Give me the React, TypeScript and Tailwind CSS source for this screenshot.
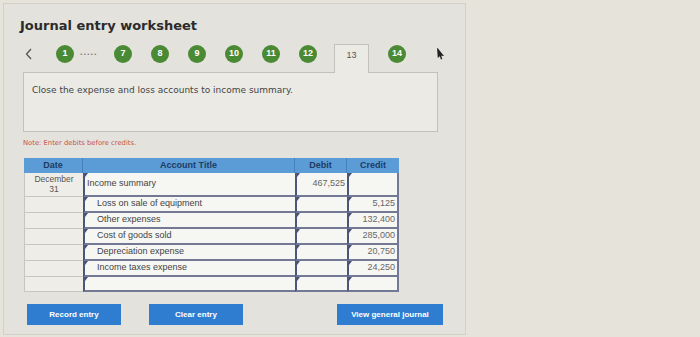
import React from "react";

const STEPS_BEFORE = [8, 9, 10, 11, 12];

// Each journal line: account title, indent flag, debit, credit
const ROWS = [
  { account: "Income summary", indent: false, debit: "467,525", credit: "" },
  { account: "Loss on sale of equipment", indent: true, debit: "", credit: "5,125" },
  { account: "Other expenses", indent: true, debit: "", credit: "132,400" },
  { account: "Cost of goods sold", indent: true, debit: "", credit: "285,000" },
  { account: "Depreciation expense", indent: true, debit: "", credit: "20,750" },
  { account: "Income taxes expense", indent: true, debit: "", credit: "24,250" },
  { account: "", indent: false, debit: "", credit: "" },
];

const StepCircle = ({ n, className = "" }: { n: number; className?: string }) => (
  <div
    className={`mt-[1px] w-[18px] h-[18px] rounded-full bg-[#4b8a34] text-white text-[9px] font-bold flex items-center justify-center shrink-0 ${className}`}
  >
    {n}
  </div>
);

// little dropdown marker shown in the top-left corner of editable cells
const Marker = () => (
  <span className="absolute left-0 top-0 w-0 h-0 border-t-[4px] border-r-[3px] border-t-[#44527a] border-r-transparent" />
);

const App = () => {
  return (
    <div
      className="w-[700px] h-[337px] bg-[#e6e3db] pt-[3px] pl-[3px] overflow-hidden"
      style={{ fontFamily: '"Liberation Sans", Arial, sans-serif' }}
    >
      <div className="w-[463px] h-[332px] border border-[#d3d0c9] bg-[#e4e2dc] flex flex-col">
        {/* Title */}
        <h1
          className="ml-[16px] mt-[14px] text-[13px] leading-[16px] font-bold text-[#2b2b2b]"
          style={{ fontFamily: '"DejaVu Sans", Verdana, sans-serif' }}
        >
          Journal entry worksheet
        </h1>

        {/* Step navigation */}
        <div className="mt-[10px] h-[29px] flex items-start">
          <svg className="ml-[21px] mt-[4px] w-[7px] h-[12px] shrink-0" viewBox="0 0 7 12">
            <path d="M6 1 L1.5 6 L6 11" fill="none" stroke="#555" strokeWidth="1.3" />
          </svg>
          <StepCircle n={1} className="ml-[24px]" />
          <span className="ml-[6px] w-[26px] mt-[3px] text-[9px] leading-[10px] tracking-[1px] text-[#777] font-bold">
            .....
          </span>
          <StepCircle n={7} className="ml-[8px]" />
          {STEPS_BEFORE.map((n) => (
            <StepCircle key={n} n={n} className="ml-[19px]" />
          ))}
          <div className="ml-[17px] w-[35px] h-[29px] border border-b-0 border-[#c3c1bb] bg-[#eceae5] relative z-10 text-center text-[9px] leading-[10px] pt-[5px] text-[#555] shrink-0">
            13
          </div>
          <StepCircle n={14} className="ml-[19px]" />
          <svg className="ml-[30px] mt-[3px] w-[9px] h-[13px] shrink-0" viewBox="0 0 9 13">
            <path d="M1 1 L2 1.5 L8 9 L5.2 8.8 L6.3 12 L5 12.5 L3.8 9.3 L1.8 11 Z" fill="#222" />
          </svg>
        </div>

        {/* Instruction box */}
        <div className="ml-[19px] -mt-[1px] w-[415px] h-[60px] border border-[#c3c1bb] bg-[#eceae5] px-[8px] pt-[11px]">
          <p
            className="text-[9px] leading-[12px] text-[#444]"
            style={{ fontFamily: '"DejaVu Sans", Verdana, sans-serif' }}
          >
            Close the expense and loss accounts to income summary.
          </p>
        </div>

        <p
          className="ml-[19px] mt-[6px] text-[6.8px] leading-[10px] text-[#c4524b]"
          style={{ fontFamily: '"DejaVu Sans", Verdana, sans-serif' }}
        >
          Note: Enter debits before credits.
        </p>

        {/* Journal table */}
        <div className="ml-[20px] mt-[10px] w-[375px]">
          <div className="grid grid-cols-[59px_212px_52px_52px] h-[15px] bg-[#5b9bd6] text-[#1d3c64] text-[9px] font-bold leading-[15px] text-center">
            <div className="border-r border-[#4680bd]">Date</div>
            <div className="border-r border-[#4680bd]">Account Title</div>
            <div className="border-r border-[#4680bd]">Debit</div>
            <div>Credit</div>
          </div>
          {ROWS.map((row, i) => {
            const h = i === 0 ? "h-[24px]" : i === ROWS.length - 1 ? "h-[15px]" : "h-[16px]";
            return (
              <div key={i} className={`grid grid-cols-[59px_212px_52px_52px] ${h}`}>
                <div className="border-l border-b border-[#c8c6c1] bg-[#efede8] text-center text-[8.5px] leading-[10px] text-[#555] pt-[1px]">
                  {i === 0 && (
                    <>
                      December
                      <br />
                      31
                    </>
                  )}
                </div>
                <div
                  className={`relative border-l-2 border-b-2 border-l-[#4e5677] border-b-[#737994] bg-[#f6f6f3] text-[9px] text-[#444] flex items-center ${
                    row.indent ? "pl-[12px]" : "pl-[2px]"
                  }`}
                >
                  <Marker />
                  {row.account}
                </div>
                <div className="relative border-l-2 border-b-2 border-l-[#4e5677] border-b-[#737994] bg-[#f6f6f3] text-[9px] text-[#666] flex items-center justify-end pr-[2px]">
                  <Marker />
                  {row.debit}
                </div>
                <div className="relative border-l-2 border-r-2 border-b-2 border-l-[#4e5677] border-r-[#737994] border-b-[#737994] bg-[#f6f6f3] text-[9px] text-[#666] flex items-center justify-end pr-[2px]">
                  <Marker />
                  {row.credit}
                </div>
              </div>
            );
          })}
        </div>

        {/* Action buttons */}
        <div className="mt-[12px] flex">
          <button className="ml-[23px] w-[94px] h-[21px] bg-[#2f7dd0] text-white text-[8px] font-bold">
            Record entry
          </button>
          <button className="ml-[28px] w-[94px] h-[21px] bg-[#2f7dd0] text-white text-[8px] font-bold">
            Clear entry
          </button>
          <button className="ml-[94px] w-[106px] h-[21px] bg-[#2f7dd0] text-white text-[8px] font-bold">
            View general journal
          </button>
        </div>
      </div>
    </div>
  );
};

export default App;
